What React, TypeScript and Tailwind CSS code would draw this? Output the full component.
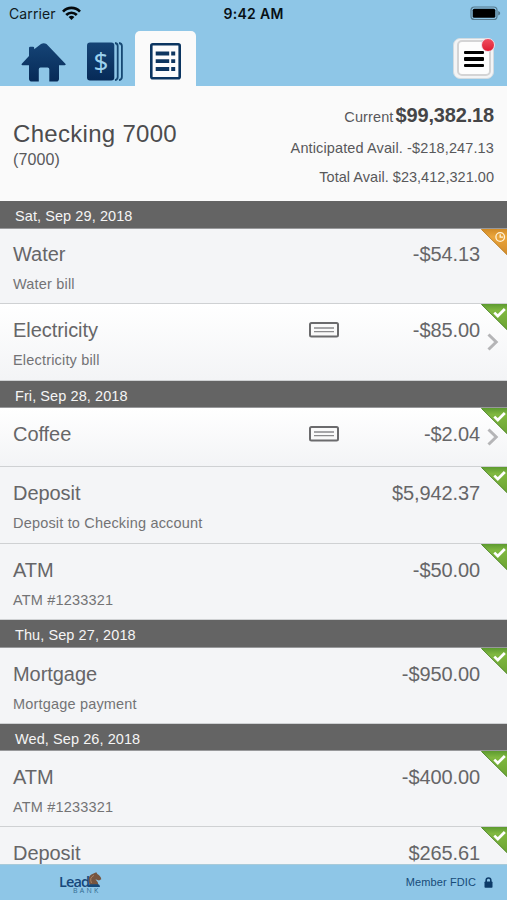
import React from "react";

type Tx = {
  name: string;
  amount: string;
  memo?: string;
  check?: boolean;
  pending?: boolean;
  height: string;
};

const groups: { date: string; height: string; items: Tx[] }[] = [
  {
    date: "Sat, Sep 29, 2018",
    height: "h-[28px]",
    items: [
      { name: "Water", amount: "-$54.13", memo: "Water bill", pending: true, height: "h-[75px]" },
      { name: "Electricity", amount: "-$85.00", memo: "Electricity bill", check: true, height: "h-[77px]" },
    ],
  },
  {
    date: "Fri, Sep 28, 2018",
    height: "h-[27px]",
    items: [
      { name: "Coffee", amount: "-$2.04", check: true, height: "h-[59px]" },
      { name: "Deposit", amount: "$5,942.37", memo: "Deposit to Checking account", height: "h-[77px]" },
      { name: "ATM", amount: "-$50.00", memo: "ATM #1233321", height: "h-[76px]" },
    ],
  },
  {
    date: "Thu, Sep 27, 2018",
    height: "h-[28px]",
    items: [{ name: "Mortgage", amount: "-$950.00", memo: "Mortgage payment", height: "h-[76px]" }],
  },
  {
    date: "Wed, Sep 26, 2018",
    height: "h-[27px]",
    items: [
      { name: "ATM", amount: "-$400.00", memo: "ATM #1233321", height: "h-[76px]" },
      { name: "Deposit", amount: "$265.61", height: "h-[76px]" },
    ],
  },
];

function Corner({ pending }: { pending?: boolean }) {
  return (
    <svg className="absolute top-0 right-0" width="26" height="26" viewBox="0 0 26 26" fill="none">
      <defs>
        <linearGradient id="green" x1="0" y1="0" x2="0" y2="1">
          <stop offset="0" stopColor="#5d9a30" />
          <stop offset="0.25" stopColor="#80b840" />
          <stop offset="1" stopColor="#6ca333" />
        </linearGradient>
        <linearGradient id="orange" x1="0" y1="0" x2="0" y2="1">
          <stop offset="0" stopColor="#d18b27" />
          <stop offset="0.3" stopColor="#eaa53b" />
          <stop offset="1" stopColor="#d28b2a" />
        </linearGradient>
      </defs>
      <path d="M0 0H26V26Z" fill={pending ? "url(#orange)" : "url(#green)"} />
      <path d="M0.4 0.4L26 25.6" stroke={pending ? "#bd8431" : "#578d35"} strokeWidth="1" />
      {pending ? (
        <g stroke="#fff3d9" strokeWidth="1.3">
          <circle cx="19.2" cy="8" r="4.3" />
          <path d="M19.2 5.2V8.2H22" />
        </g>
      ) : (
        <path d="M13.3 8.6L16.8 12L23.8 5" stroke="#fff" strokeWidth="2.7" />
      )}
    </svg>
  );
}

function CheckSlip() {
  return (
    <svg className="self-center" width="30" height="16" viewBox="0 0 30 16" fill="none">
      <rect x="1" y="1" width="28" height="13.4" rx="1.5" stroke="#6b6b6d" strokeWidth="2" fill="#fafafa" />
      <path d="M5 6H25M5 9.6H25" stroke="#8b8b8d" strokeWidth="1.4" />
    </svg>
  );
}

function Row({ tx }: { tx: Tx }) {
  return (
    <div
      className={`relative shrink-0 border-b border-[#cfd1d3] ${tx.height} ${
        tx.check ? "bg-linear-to-b from-white to-[#f3f4f6]" : "bg-[#f4f5f7]"
      }`}
    >
      <div
        className={`flex items-center pr-[27px] pl-[13px] text-[20px] leading-[30px] text-[#666668] ${
          tx.pending ? "pt-[10px]" : "pt-[11px]"
        }`}
      >
        <span className="flex-1 tracking-[-0.06px]">{tx.name}</span>
        {tx.check && (
          <span className="flex w-[171px]">
            <CheckSlip />
            <span className="flex-1 text-right tracking-[-0.1px]">{tx.amount}</span>
          </span>
        )}
        {!tx.check && <span className="tracking-[-0.1px]">{tx.amount}</span>}
      </div>
      {tx.memo && (
        <div className="pt-[5px] pl-[13px] text-[14.5px] leading-5 tracking-[0.18px] text-[#737375]">{tx.memo}</div>
      )}
      {tx.check && (
        <svg
          className={`absolute right-[8px] ${tx.memo ? "top-[29px]" : "top-[20px]"}`}
          width="12"
          height="18"
          viewBox="0 0 12 18"
          fill="none"
          stroke="#b5b5b7"
          strokeWidth="3"
        >
          <path d="M1.5 1.5L9.2 9L1.5 16.5" />
        </svg>
      )}
      <Corner pending={tx.pending} />
    </div>
  );
}

function StatusBar() {
  return (
    <div className="flex h-[27px] items-center pr-[6px] pl-[9px] font-[Inter,sans-serif] text-[14px] text-[#111b22]">
      <div className="flex flex-1 items-center gap-[6px]">
        <span className="tracking-[0.1px]">Carrier</span>
        <svg width="19" height="15" viewBox="0 0 19 15" fill="none" stroke="#050a0d" strokeWidth="2.7">
          <path d="M1 5.6C5.8 0.7 13.2 0.7 18 5.6" />
          <path d="M4.2 9C7.2 6 11.8 6 14.8 9" />
          <path d="M6.6 11Q9.5 8.6 12.4 11L9.5 14Z" fill="#050a0d" stroke="none" />
        </svg>
      </div>
      <span className="mr-[3px] text-[14px] font-semibold tracking-[0.3px] text-[#081015]">9:42 AM</span>
      <div className="flex flex-1 justify-end">
        <svg width="31" height="15" viewBox="0 0 31 15">
          <rect x="1" y="1" width="26" height="12.5" rx="3.3" fill="none" stroke="#55798d" strokeWidth="1.2" />
          <rect x="2.7" y="2.7" width="22.6" height="9.1" rx="1.6" fill="#000" />
          <path d="M28.2 5Q30.5 6 30.2 7.3Q30.4 8.7 28.2 9.6Z" fill="#55798d" />
        </svg>
      </div>
    </div>
  );
}

function NavBar() {
  return (
    <div className="flex h-[59px] items-end pr-[13px] pl-[21px]">
      <svg className="mb-[4px]" width="46" height="39" viewBox="0 0 46 39">
        <defs>
          <linearGradient id="navy" x1="0" y1="0" x2="0" y2="1">
            <stop offset="0" stopColor="#154476" />
            <stop offset="1" stopColor="#062a57" />
          </linearGradient>
        </defs>
        <path
          d="M8 10V5Q8 3.8 9.2 3.8H12Q13.2 3.8 13.2 5V6.2L20 1Q22.7-0.4 25.5 1L44.6 21Q45 22.2 43.5 22.3H38V35.7Q38 38.5 35.2 38.5H28.3V26.2Q28.3 24.5 26.6 24.5H19.5Q17.8 24.5 17.8 26.2V38.5H11Q8 38.5 8 35.7V22.3H1.5Q0 22.2 0.8 20.8L8 13Z"
          fill="url(#navy)"
        />
      </svg>
      <svg className="mb-[5px] ml-[20px]" width="37" height="39" viewBox="0 0 37 39">
        <rect x="0" y="0.5" width="27.3" height="38" rx="3" fill="url(#navy)" />
        <path d="M28 1Q30.7 1.5 30.7 4V35Q30.7 37.5 28 38.2M32 1Q34.9 1.5 34.9 4V35Q34.9 37.5 32 38.2" fill="none" stroke="#164873" strokeWidth="1.8" />
        <text x="14" y="28.5" textAnchor="middle" fontFamily="Noto Sans, sans-serif" fontSize="26" fill="#9bd1ee">
          $
        </text>
      </svg>
      <div className="ml-[11px] flex h-[55px] w-[61px] items-center justify-center rounded-t-[5px] bg-[#fafafa] pt-[6px]">
        <svg width="31" height="37" viewBox="0 0 31 37">
          <rect x="1.3" y="1.3" width="28.4" height="34" rx="1.5" fill="#fcfcfd" stroke="#0b3561" strokeWidth="2.6" />
          <path
            d="M5 9.5H18.5M20.5 9.5H24.5M5 17.2H18.5M20.5 17.2H24.5M5 25H18.5M20.5 25H24.5"
            stroke="#0d3560"
            strokeWidth="3.8"
            transform="translate(0.7 1)"
          />
        </svg>
      </div>
      <div className="relative mb-[7px] ml-auto flex h-[41px] w-[41px] items-center justify-center rounded-[7px] border border-[#d2dbe1] bg-[#f3f4f5]">
        <div className="mb-[1px] flex h-[36px] w-[34px] items-center justify-center rounded-[5px] border-2 border-[#d4d4d5] bg-[#fdfdfd]">
          <div className="flex flex-col gap-[3px] pt-[2px]">
            <div className="h-[3.3px] w-[20px] rounded-[1px] bg-black" />
            <div className="h-[3.3px] w-[20px] rounded-[1px] bg-black" />
            <div className="h-[3.3px] w-[20px] rounded-[1px] bg-black" />
          </div>
        </div>
        <div className="absolute top-[-1px] right-[-2px] h-[14px] w-[14px] rounded-full border border-[#f1dce4] bg-linear-to-b from-[#f04b5e] to-[#dd1731]" />
      </div>
    </div>
  );
}

function BankLogo() {
  return (
    <div className="flex w-[45px] flex-col pt-[1px] font-['Open_Sans',sans-serif]">
      <div className="flex h-[15px] items-end">
        <span className="w-[28px] text-[14.5px] leading-[11px] font-semibold tracking-[-0.9px] text-[#17477a]">Lead</span>
        <svg width="15" height="15" viewBox="0 0 15 15">
          <path d="M2.5 12.8Q-0.5 3.5 6.5 1.6L9.3 0.2L10.3 1.9Q13.7 3.5 14.3 7.2L12 8.5L8.4 7.2Q11.5 10 11.5 13Z" fill="#76553f" />
          <path d="M4.5 11Q2 5.5 7 3.4" fill="none" stroke="#b68b69" strokeWidth="0.8" />
          <path d="M1 15Q1 12.3 3 12.3H11Q13 12.3 13 15Z" fill="#164978" />
        </svg>
      </div>
      <span className="pl-[14px] text-[7px] leading-[8px] tracking-[2.3px] text-[#326b91]">BANK</span>
    </div>
  );
}

export default function App() {
  return (
    <div className="flex h-[900px] w-[507px] flex-col overflow-hidden bg-[#8ec6e7] font-['Liberation_Sans',Arial,sans-serif]">
      <StatusBar />
      <NavBar />
      <div className="flex h-[115px] shrink-0 justify-between bg-[#fafafa] pr-[13px] pl-[13px] text-[#58585a]">
        <div className="pt-[33px]">
          <div className="text-[24px] leading-[30px] tracking-[0.3px] text-[#4c4c4e]">Checking 7000</div>
          <div className="pt-[1px] text-[16px] leading-[20px] tracking-[0.1px]">(7000)</div>
        </div>
        <div className="pt-[15px] text-right text-[14.5px] tracking-[0.12px]">
          <div className="leading-[29px]">
            Current
            <span className="ml-[2px] text-[20px] font-bold tracking-[-0.16px] text-[#454547]">$99,382.18</span>
          </div>
          <div className="leading-[32px]">Anticipated Avail. -$218,247.13</div>
          <div className="leading-[27px] tracking-[0.03px]">Total Avail. $23,412,321.00</div>
        </div>
      </div>
      <div className="flex h-[663px] shrink-0 flex-col overflow-hidden">
        {groups.map((g) => (
          <React.Fragment key={g.date}>
            <div
              className={`shrink-0 border-b border-[#98999b] bg-[#646464] pt-[1px] pl-[15px] text-[14.5px] leading-[28px] tracking-[0.08px] text-[#f5f5f5] ${g.height}`}
            >
              {g.date}
            </div>
            {g.items.map((tx, i) => (
              <Row key={i} tx={tx} />
            ))}
          </React.Fragment>
        ))}
      </div>
      <footer className="flex h-[36px] shrink-0 items-center justify-between border-t border-[#a8cad9] pr-[14px] pl-[59px] text-[#174b78]">
        <BankLogo />
        <div className="flex items-center gap-[8px] text-[11px] tracking-[0.1px]">
          Member FDIC
          <svg width="9" height="11" viewBox="0 0 9 11">
            <path d="M2.2 5V3.2C2.2 0.3 6.8 0.3 6.8 3.2V5" fill="none" stroke="#0d3b68" strokeWidth="1.6" />
            <rect x="0.5" y="4.5" width="8" height="6.2" rx="0.8" fill="#0d3b68" />
          </svg>
        </div>
      </footer>
    </div>
  );
}
